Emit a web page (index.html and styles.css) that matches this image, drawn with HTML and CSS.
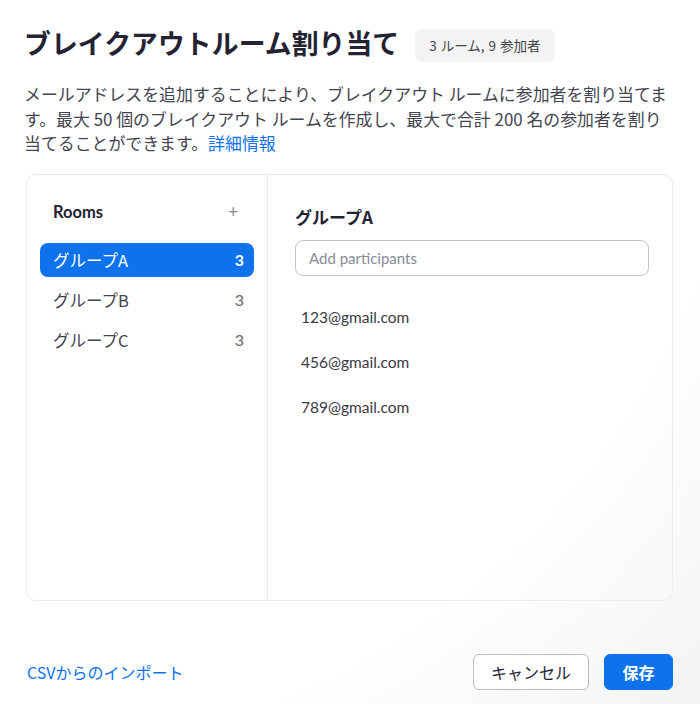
FILE: index.html
```html
<!DOCTYPE html>
<html lang="ja">
<head>
<meta charset="utf-8">
<title>ブレイクアウトルーム割り当て</title>
<link rel="stylesheet" href="styles.css">
</head>
<body>
<div class="dialog">
  <header class="head">
    <h1 class="title">ブレイクアウトルーム割り当て</h1>
    <span class="badge">3 ルーム, 9 参加者</span>
  </header>
  <p class="desc">メールアドレスを追加することにより、ブレイクアウト ルームに参加者を割り当てます。最大 50 個のブレイクアウト ルームを作成し、最大で合計 200 名の参加者を割り<br>当てることができます。<a class="link" href="#">詳細情報</a></p>
  <section class="panel">
    <aside class="rooms">
      <div class="rooms-head"><span class="rooms-title">Rooms</span><span class="plus">+</span></div>
      <ul class="room-list">
        <li class="room active"><span>グループA</span><span class="count">3</span></li>
        <li class="room"><span>グループB</span><span class="count">3</span></li>
        <li class="room"><span>グループC</span><span class="count">3</span></li>
      </ul>
    </aside>
    <div class="detail">
      <h2 class="group-title">グループA</h2>
      <div class="input">Add participants</div>
      <ul class="emails">
        <li>123@gmail.com</li>
        <li>456@gmail.com</li>
        <li>789@gmail.com</li>
      </ul>
    </div>
  </section>
  <footer class="foot">
    <a class="link import" href="#">CSVからのインポート</a>
    <div class="actions">
      <button class="btn cancel">キャンセル</button>
      <button class="btn save">保存</button>
    </div>
  </footer>
</div>
</body>
</html>
```
FILE: styles.css
```css
* { box-sizing: border-box; }
html, body { margin: 0; padding: 0; }
body {
  width: 700px;
  height: 704px;
  background: radial-gradient(circle at 0 0, #ffffff 75%, #f3f3f3 100%);
  font-family: "Noto Sans CJK JP", "Noto Sans", sans-serif;
  color: #232333;
  overflow: hidden;
}
.dialog {
  padding: 22px 27px 0 24px;
}
.head {
  display: flex;
  align-items: center;
  gap: 16px;
  height: 42px;
}
.title {
  margin: 0;
  font-size: 26.8px;
  font-weight: 700;
  color: #232333;
  letter-spacing: 0.1px;
  line-height: 42px;
}
.badge {
  background: #f3f3f6;
  border-radius: 8px;
  font-size: 13.5px;
  color: #444;
  padding: 0 14px;
  height: 33px;
  line-height: 33px;
  margin-top: 4px;
  word-spacing: 1px;
}
.desc {
  margin: 18px 0 0 0;
  font-size: 16.9px;
  line-height: 24.5px;
  color: #444450;
}
.link {
  color: #0e72ed;
  text-decoration: none;
}
.panel {
  margin: 18px 0 0 2px;
  height: 427px;
  border: 1px solid #ececee;
  border-radius: 10px;
  display: flex;
}
.rooms {
  width: 241px;
  border-right: 1px solid #ececee;
  padding: 0 13px;
}
.rooms-head {
  display: flex;
  justify-content: space-between;
  align-items: center;
  padding: 24px 16px 0 13px;
  height: 50px;
}
.rooms-title {
  font-family: Lato, "Noto Sans", sans-serif;
  font-weight: 700;
  font-size: 16.5px;
  color: #232333;
}
.plus {
  font-family: Lato, sans-serif;
  font-size: 17px;
  color: #888;
  font-weight: 400;
}
.room-list {
  list-style: none;
  margin: 18px 0 0 0;
  padding: 0;
}
.room {
  display: flex;
  justify-content: space-between;
  align-items: center;
  height: 34px;
  padding: 0 10px 0 13px;
  margin-bottom: 6px;
  font-size: 16.5px;
  color: #444450;
  border-radius: 8px;
}
.room .count {
  font-family: Lato, sans-serif;
  font-size: 16px;
  color: #666;
}
.room.active {
  background: #0e72ed;
  color: #fff;
}
.room.active .count {
  color: #fff;
  font-weight: 700;
}
.detail {
  flex: 1;
  padding: 31px 23px 0 27px;
}
.group-title {
  margin: 0;
  font-size: 17px;
  font-weight: 700;
  line-height: 22px;
  color: #232333;
}
.input {
  margin-top: 12px;
  height: 36px;
  border: 1px solid #c4c4cc;
  border-radius: 8px;
  padding: 0 13px;
  line-height: 34px;
  font-family: Lato, sans-serif;
  font-size: 15px;
  color: #8a8a96;
}
.emails {
  list-style: none;
  margin: 31px 0 0 0;
  padding: 0 0 0 6px;
  font-family: Lato, sans-serif;
  font-size: 15.5px;
  color: #3a3a44;
}
.emails li {
  height: 45px;
  line-height: 20px;
}
.foot {
  display: flex;
  justify-content: space-between;
  align-items: center;
  margin-top: 53px;
  padding-left: 3px;
}
.import {
  font-size: 16px;
}
.actions {
  display: flex;
  gap: 15px;
}
.btn {
  height: 36px;
  border-radius: 6px;
  font-family: "Noto Sans CJK JP", sans-serif;
  font-size: 16px;
  padding: 0;
}
.cancel {
  width: 116px;
  background: #fff;
  border: 1px solid #babac4;
  color: #232333;
}
.save {
  width: 69px;
  background: #0e72ed;
  border: 1px solid #0e72ed;
  color: #fff;
  font-weight: 700;
}
```
